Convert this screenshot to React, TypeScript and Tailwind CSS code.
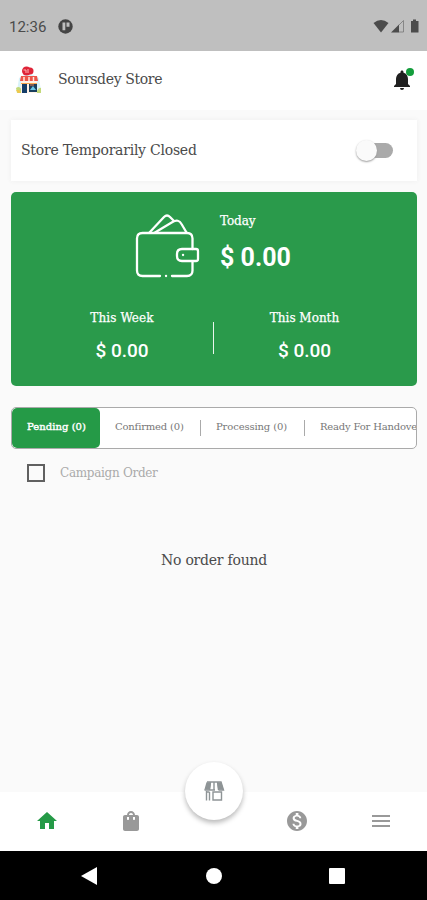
import { MdHome, MdMenu, MdMonetizationOn, MdNotifications, MdShoppingBag } from "react-icons/md"

const tabs = [
    { label: "Pending (0)", className: "w-[88px] pl-[15px] h-10 pb-[3px] rounded-[5px] bg-[#259a47] text-white tracking-[0.05px] [-webkit-text-stroke:0.4px_white]" },
    { label: "Confirmed (0)", className: "w-[100px] pl-[15px] pb-[3px] tracking-[-0.17px]" },
    { label: "Processing (0)", className: "w-[104px] pl-4 pb-[3px] tracking-[-0.12px]" },
    { label: "Ready For Handove", className: "pl-4 pb-[3px] tracking-[-0.18px]" },
]

function StoreLogo() {
    return (
        <svg className="w-[28px] h-[30px]" viewBox="0 0 28 30">
            <path d="M4 13 14 8l10 5 2 13H2z" fill="#d9f3fa" />
            <path d="M1 23q4-3 6 3h15q2-4 4-3v5H2z" fill="#c3d97a" />
            <path d="M1 25h3l2 3H3z" fill="#f1c74b" />
            <rect x="6" y="13" width="16" height="15" fill="#fff2e7" />
            <circle cx="11.500" cy="6" r="4.500" fill="#df2438" />
            <circle cx="15" cy="6" r="3.500" fill="#df2438" />
            <path d="M8.500 5h2.500v3M13 4v4" fill="none" stroke="#ffb8b5" />
            <path d="M6 11h16l1 5H5z" fill="#ed5549" />
            <path d="M9 12v4M14 12v4M18.500 12v4" stroke="#ffe8df" strokeWidth="1.500" />
            <path d="M6 18.500h16" stroke="#f6a64e" />
            <rect x="7" y="19" width="5" height="9" fill="#153e69" />
            <rect x="14" y="19" width="8" height="8" fill="#193f5d" />
            <path d="m15 25 3-4 3 4z" fill="#6ac7e6" />
            <path d="M15 20h4" stroke="#ea7b44" />
        </svg>
    )
}

function StatusBar() {
    return (
        <div className="h-[51px] shrink-0 bg-[#bfbfbf] flex items-center justify-between pl-[9px] pr-[7px] pt-[2px] text-[#4b4b4b]">
            <div className="flex items-center gap-3">
                <span className="w-[37px] whitespace-nowrap font-[Roboto,sans-serif] text-[15px] leading-5">12:36</span>
                <svg className="w-[15px] h-[15px]" viewBox="0 0 15 15">
                    <circle cx="7.500" cy="7.500" r="7.200" fill="#444" />
                    <path d="M4.500 3.500h2.800v7.700H4.500zM8.500 3.500h3v4.200h-3z" fill="#bfbfbf" />
                </svg>
            </div>
            <svg className="w-[47px] h-[15px]" viewBox="0 0 47 15">
                <path d="M.5 4Q8-2 15.500 4L8 13.500z" fill="#4b4b4b" />
                <path d="M18 13.500 26 5.500v8z" fill="#4b4b4b" />
                <path d="M26 6 30.500 1.500v11.500H26" fill="none" stroke="#777" strokeWidth=".8" />
                <path d="M38 2h2V.5h3V2h2.500v11.500H38z" fill="#4b4b4b" />
            </svg>
        </div>
    )
}

function WalletIcon() {
    return (
        <svg className="mt-px w-[65px] h-[65px]" viewBox="0 0 65 65" fill="none" stroke="white" strokeWidth="2.300" strokeLinecap="round" strokeLinejoin="round">
            <path d="M25 62H7.500q-5.500 0-5.500-5.500v-32Q2 19 7.500 19h44.500q5.500 0 5.500 5.500V35M57.500 48v8.500q0 5.500-5.500 5.500H37M31 62h.1" />
            <path d="M14.500 18.500 29 3q3-3 6 0l4 4M20 18.500 37.500 8q6-3.500 9 2l5 8.500" />
            <path d="M47 35h14q2 0 2 2v8q0 2-2 2H47q-5 0-5-5v-2q0-5 5-5z" />
            <path d="M48 41h.1" />
        </svg>
    )
}

function ShopIcon() {
    return (
        <svg className="w-[22px] h-[22px]" viewBox="0 0 22 22" fill="none" stroke="#8e9496" strokeWidth="1.400">
            <path d="M4 2h14l2.500 8H15.500M7.500 2 6.500 10M11 2v8M14.500 2l1 8M1.500 10H12M3.500 11v9.500M6.500 12v8.500M10 12h8.500v8H10zM3.500 12h3" />
            <path d="M4 3 2.300 9h4l1-6zM15 3l.8 6h3.800l-1.800-6z" fill="#8e9496" />
        </svg>
    )
}

export default function App() {
    return (
        <div className="w-[427px] h-[900px] overflow-hidden bg-[#fafafa] flex flex-col font-['DejaVu_Serif',serif] text-[#4a4a4a]">
            <StatusBar />

            {/* Store header */}
            <header className="h-[59px] shrink-0 bg-white flex items-center pl-[15px] pr-[13px] pb-[2px]">
                <StoreLogo />
                <span className="ml-[15px] text-[14px] tracking-[-0.36px]">Soursdey Store</span>
                <div className="relative ml-auto w-[24px] h-[24px]">
                    <MdNotifications className="w-[24px] h-[24px] text-[#202020]" />
                    <span className="absolute right-0 top-0 w-2 h-2 rounded-full bg-[#139d3c]" />
                </div>
            </header>

            <main className="flex-1 px-[11px] pt-[10px] pr-[10px]">
                <div className="h-[61px] bg-white shadow-[0_0_5px_#eeeeee] flex items-center justify-between pl-[10px] pr-[24px]">
                    <span className="text-[14px] tracking-[-0.24px] whitespace-nowrap">Store Temporarily Closed</span>
                    <div className="relative w-[35px] h-[15px] rounded-full bg-[#aaaaaa]">
                        <div className="absolute -left-[2px] -top-[3px] w-[21px] h-[21px] rounded-full bg-[#fafafa] shadow-[0_1px_2px_#999999]" />
                    </div>
                </div>

                {/* Earnings */}
                <section className="mt-[11px] h-[194px] rounded-[5px] bg-[#2a9a4b] text-white">
                    <div className="flex pt-[21px] pl-[124px]">
                        <WalletIcon />
                        <div className="ml-5">
                            <div className="text-[12px] leading-[16px] tracking-[-0.1px] [-webkit-text-stroke:0.25px_white]">Today</div>
                            <div className="mt-[13px] font-[Roboto,sans-serif] font-bold text-[25px] leading-[32px]">$ 0.00</div>
                        </div>
                    </div>
                    <div className="mt-[31px] flex text-center">
                        <div className="w-[202px] pl-[20px]">
                            <div className="text-[12px] leading-4 tracking-[0.1px] [-webkit-text-stroke:0.25px_white]">This Week</div>
                            <div className="mt-[13px] font-[Roboto,sans-serif] font-medium text-[19px] leading-6">$ 0.00</div>
                        </div>
                        <div className="mt-[12px] w-px h-8 bg-white/90" />
                        <div className="w-[203px] pr-[22px]">
                            <div className="text-[12px] leading-4 [-webkit-text-stroke:0.25px_white]">This Month</div>
                            <div className="mt-[13px] font-[Roboto,sans-serif] font-medium text-[19px] leading-6">$ 0.00</div>
                        </div>
                    </div>
                </section>

                {/* Order filter */}
                <div className="mt-[21px] h-[42px] rounded-[5px] border border-[#aaaaaa] bg-white flex items-center overflow-hidden text-[10px] text-[#777777]">
                    {tabs.map((tab, index) => (
                        <div key={tab.label} className="flex items-center shrink-0">
                            {index > 1 && <span className="w-px h-4 bg-[#aaaaaa] -mr-px" />}
                            <div className={`${tab.className} flex items-center whitespace-nowrap`}>{tab.label}</div>
                        </div>
                    ))}
                </div>

                <div className="mt-[15px] ml-4 flex items-center">
                    <span className="w-[18px] h-[18px] border-2 border-[#606060]" />
                    <span className="ml-[15px] text-[12px] leading-[18px] tracking-[-0.3px] text-[#aaaaaa]">Campaign Order</span>
                </div>
                <p className="mt-[67px] text-center text-[14px] leading-[22px] tracking-[-0.22px]">No order found</p>
            </main>

            {/* Bottom navigation */}
            <nav className="relative h-[59px] shrink-0 bg-white pb-[2px] grid grid-cols-[94px_73px_93px_74px_93px] items-center text-[#999999]">
                <MdHome className="w-6 h-6 justify-self-center text-[#259a47]" />
                <MdShoppingBag className="w-6 h-6 justify-self-center" />
                <div className="absolute left-[185px] -top-[30px] w-[58px] h-[58px] rounded-full bg-white shadow-[0_3px_5px_#bbbbbb] flex items-center justify-center">
                    <ShopIcon />
                </div>
                <MdMonetizationOn className="col-start-4 w-6 h-6 justify-self-center" />
                <MdMenu className="w-6 h-6 justify-self-center" />
            </nav>

            <div className="h-[49px] shrink-0 bg-black flex items-center justify-between pl-[81px] pr-[82px]">
                <svg className="w-4 h-[18px]" viewBox="0 0 16 18"><path d="M0 9 16 0v18z" fill="white" /></svg>
                <span className="w-4 h-4 ml-px rounded-full bg-white" />
                <span className="w-4 h-4 rounded-[1px] bg-white" />
            </div>
        </div>
    )
}
